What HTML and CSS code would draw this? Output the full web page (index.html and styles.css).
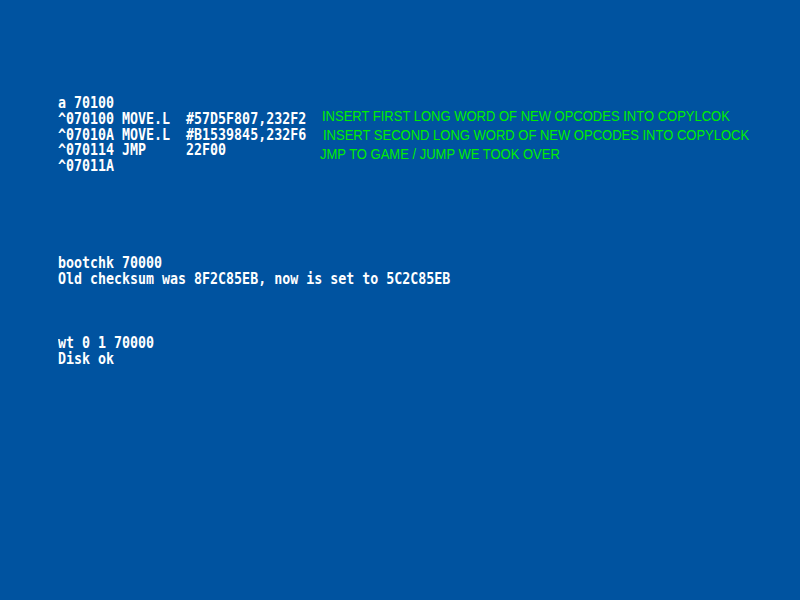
FILE: index.html
```html
<!DOCTYPE html>
<html>
<head>
<meta charset="utf-8">
<link rel="stylesheet" href="styles.css">
</head>
<body>
<div class="screen">
<div class="console">
<pre class="block">a 70100
^070100 MOVE.L  #57D5F807,232F2
^07010A MOVE.L  #B1539845,232F6
^070114 JMP     22F00
^07011A</pre>
<pre class="block gap5">bootchk 70000
Old checksum was 8F2C85EB, now is set to 5C2C85EB</pre>
<pre class="block gap3">wt 0 1 70000
Disk ok</pre>
</div>
<div class="notes">
<div class="note n1">INSERT FIRST LONG WORD OF NEW OPCODES INTO COPYLCOK</div>
<div class="note n2">INSERT SECOND LONG WORD OF NEW OPCODES INTO COPYLOCK</div>
<div class="note n3">JMP TO GAME / JUMP WE TOOK OVER</div>
</div>
</div>
</body>
</html>
```
FILE: styles.css
```css
html, body {
  margin: 0;
  padding: 0;
  background: #0053a0;
}
.screen {
  position: relative;
  width: 800px;
  height: 600px;
  background: #0053a0;
  overflow: hidden;
}
.console {
  display: flex;
  flex-direction: column;
  align-items: flex-start;
  padding: 76px 0 0 58px;
  font-family: "DejaVu Sans Mono", "Liberation Mono", monospace;
  font-weight: bold;
  font-size: 13.3px;
  line-height: 12.8px;
  color: #ffffff;
  transform: scaleY(1.25);
  transform-origin: 0 0;
}
.block {
  margin: 0;
  font: inherit;
  line-height: inherit;
  white-space: pre;
}
.gap5 { margin-top: 64px; }
.gap3 { margin-top: 38.4px; }
.notes {
  position: absolute;
  left: 320px;
  top: 106.5px;
  display: flex;
  flex-direction: column;
  font-family: "Liberation Sans", Arial, sans-serif;
  font-size: 13px;
  line-height: 16.5px;
  color: #00ee00;
  transform: scaleY(1.15);
  transform-origin: 0 0;
}
.note { white-space: nowrap; }
.n1 { padding-left: 2px; }
.n2 { padding-left: 3px; }
.n3 { padding-left: 0; }
```
